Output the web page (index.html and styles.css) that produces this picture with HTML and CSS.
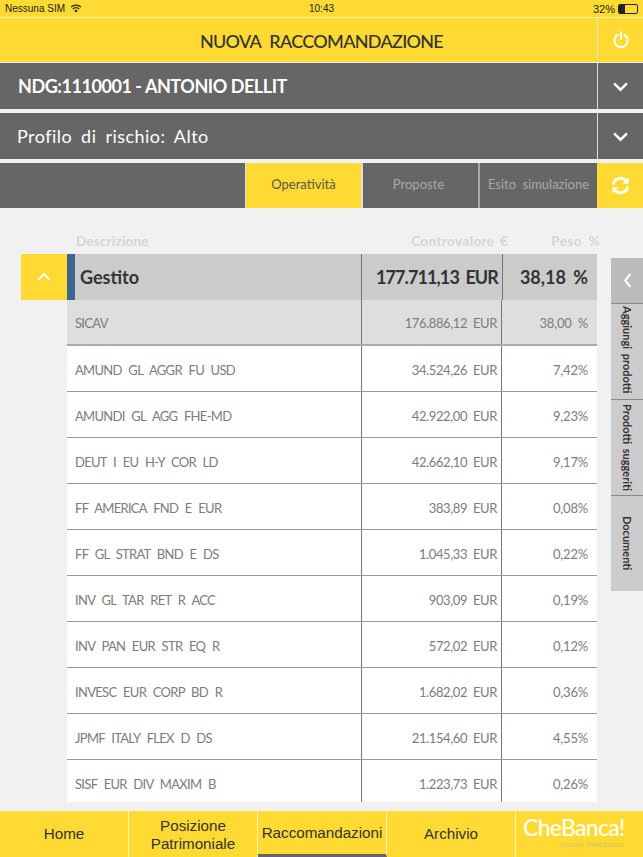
FILE: index.html
```html
<!DOCTYPE html>
<html lang="it">
<head>
    <meta charset="UTF-8">
    <meta name="viewport" content="width=device-width, initial-scale=1.0">
    <title>Nuova Raccomandazione</title>
    <link rel="stylesheet" href="styles.css">
</head>
<body>
    <div class="app">
        <div class="status">
            <div class="status-left">
                <span>Nessuna SIM</span>
                <svg class="wifi" viewBox="0 0 12 9" width="12" height="9"><path d="M1 3.2a7 7 0 0 1 10 0M2.8 5a4.5 4.5 0 0 1 6.4 0" fill="none" stroke="#222" stroke-width="1.2"/><path d="M6 8.6 4.3 6.7a2.4 2.4 0 0 1 3.4 0z" fill="#222"/></svg>
            </div>
            <span class="status-time">10:43</span>
            <div class="status-right">
                <span>32%</span>
                <span class="battery"><span class="battery-fill"></span></span>
            </div>
        </div>

        <header class="bar bar-yellow bar-title">
            <h1>NUOVA RACCOMANDAZIONE</h1>
            <div class="bar-btn">
                <svg viewBox="0 0 20 20" width="18" height="18"><path d="M6.2 4.2a7.4 7.4 0 1 0 7.6 0" fill="none" stroke="#fff" stroke-width="2.2" stroke-linecap="round"/><path d="M10 1.5v7.5" stroke="#fff" stroke-width="2.2" stroke-linecap="round"/></svg>
            </div>
        </header>

        <div class="bar bar-dark">
            <div class="bar-text bar-ndg">NDG:1110001 - ANTONIO DELLIT</div>
            <div class="bar-btn">
                <svg viewBox="0 0 18 12" width="17" height="11"><path d="M2 2.5 9 9.5 16 2.5" fill="none" stroke="#fff" stroke-width="2.6"/></svg>
            </div>
        </div>

        <div class="bar bar-dark bar-second">
            <div class="bar-text bar-profile">Profilo di rischio: Alto</div>
            <div class="bar-btn">
                <svg viewBox="0 0 18 12" width="17" height="11"><path d="M2 2.5 9 9.5 16 2.5" fill="none" stroke="#fff" stroke-width="2.6"/></svg>
            </div>
        </div>

        <nav class="tabs">
            <div class="tabs-space"></div>
            <div class="tab tab-active">Operatività</div>
            <div class="tab tab-proposte">Proposte</div>
            <div class="tab tab-esito">Esito simulazione</div>
            <div class="tab-refresh">
                <svg viewBox="0 0 20 20" width="19" height="19"><path d="M2.5 9a7.6 7.6 0 0 1 13-4.2" fill="none" stroke="#fff" stroke-width="3"/><path d="M18.6 1.5v6.6h-6.6z" fill="#fff"/><path d="M17.5 11a7.6 7.6 0 0 1-13 4.2" fill="none" stroke="#fff" stroke-width="3"/><path d="M1.4 18.5v-6.6h6.6z" fill="#fff"/></svg>
            </div>
        </nav>

        <main class="content">
            <div class="col-heads">
                <span class="col-name">Descrizione</span>
                <span class="col-value">Controvalore €</span>
                <span class="col-weight">Peso %</span>
            </div>

            <div class="group">
                <div class="group-toggle">
                    <svg viewBox="0 0 18 12" width="16" height="10"><path d="M2 9.5 9 2.5 16 9.5" fill="none" stroke="#fff" stroke-width="2.4"/></svg>
                </div>
                <div class="group-table">
                    <div class="row row-group">
                        <div class="cell cell-name">Gestito</div>
                        <div class="cell cell-value">177.711,13 EUR</div>
                        <div class="cell cell-weight">38,18 %</div>
                    </div>
                    <div class="row row-sub">
                        <div class="cell cell-name">SICAV</div>
                        <div class="cell cell-value">176.886,12 EUR</div>
                        <div class="cell cell-weight">38,00 %</div>
                    </div>
                    <div class="row">
                        <div class="cell cell-name">AMUND GL AGGR FU USD</div>
                        <div class="cell cell-value">34.524,26 EUR</div>
                        <div class="cell cell-weight">7,42%</div>
                    </div>
                    <div class="row">
                        <div class="cell cell-name">AMUNDI GL AGG FHE-MD</div>
                        <div class="cell cell-value">42.922,00 EUR</div>
                        <div class="cell cell-weight">9,23%</div>
                    </div>
                    <div class="row">
                        <div class="cell cell-name">DEUT I EU H-Y COR LD</div>
                        <div class="cell cell-value">42.662,10 EUR</div>
                        <div class="cell cell-weight">9,17%</div>
                    </div>
                    <div class="row">
                        <div class="cell cell-name">FF AMERICA FND E EUR</div>
                        <div class="cell cell-value">383,89 EUR</div>
                        <div class="cell cell-weight">0,08%</div>
                    </div>
                    <div class="row">
                        <div class="cell cell-name">FF GL STRAT BND E DS</div>
                        <div class="cell cell-value">1.045,33 EUR</div>
                        <div class="cell cell-weight">0,22%</div>
                    </div>
                    <div class="row">
                        <div class="cell cell-name">INV GL TAR RET R ACC</div>
                        <div class="cell cell-value">903,09 EUR</div>
                        <div class="cell cell-weight">0,19%</div>
                    </div>
                    <div class="row">
                        <div class="cell cell-name">INV PAN EUR STR EQ R</div>
                        <div class="cell cell-value">572,02 EUR</div>
                        <div class="cell cell-weight">0,12%</div>
                    </div>
                    <div class="row">
                        <div class="cell cell-name">INVESC EUR CORP BD R</div>
                        <div class="cell cell-value">1.682,02 EUR</div>
                        <div class="cell cell-weight">0,36%</div>
                    </div>
                    <div class="row">
                        <div class="cell cell-name">JPMF ITALY FLEX D DS</div>
                        <div class="cell cell-value">21.154,60 EUR</div>
                        <div class="cell cell-weight">4,55%</div>
                    </div>
                    <div class="row row-last">
                        <div class="cell cell-name">SISF EUR DIV MAXIM B</div>
                        <div class="cell cell-value">1.223,73 EUR</div>
                        <div class="cell cell-weight">0,26%</div>
                    </div>
                </div>
            </div>

            <aside class="side">
                <div class="side-arrow">
                    <svg viewBox="0 0 10 18" width="9" height="17"><path d="M8 2 2.5 9 8 16" fill="none" stroke="#fff" stroke-width="2.4"/></svg>
                </div>
                <div class="side-tab side-tab-first"><span>Aggiungi prodotti</span></div>
                <div class="side-tab"><span>Prodotti suggeriti</span></div>
                <div class="side-tab"><span>Documenti</span></div>
            </aside>
        </main>

        <footer class="footer">
            <div class="foot-item">Home</div>
            <div class="foot-item foot-two">Posizione<br>Patrimoniale</div>
            <div class="foot-item foot-active">Raccomandazioni</div>
            <div class="foot-item">Archivio</div>
            <div class="foot-logo">
                <div class="logo-main">CheBanca!</div>
                <div class="logo-sub">Gruppo Mediobanca</div>
            </div>
        </footer>
    </div>
</body>
</html>
```

FILE: styles.css
```css
body {
    margin: 0;
    font-family: Lato, "Open Sans", sans-serif;
    background-color: #f1f1f1;
}
.app {
    width: 643px;
    height: 857px;
    display: flex;
    flex-direction: column;
    overflow: hidden;
}

/* status bar */
.status {
    height: 17px;
    background-color: #ffda33;
    border-bottom: 1px solid #fbeea8;
    display: grid;
    grid-template-columns: 1fr auto 1fr;
    align-items: center;
    padding: 0 5px;
    font-family: "Liberation Sans", Arial, sans-serif;
    font-size: 10px;
    color: #222;
}
.status-left {
    display: flex;
    align-items: center;
    gap: 5px;
}
.status-right {
    display: flex;
    align-items: center;
    justify-content: flex-end;
    gap: 3px;
    font-size: 11px;
}
.battery {
    width: 18px;
    height: 8px;
    border: 1px solid #222;
    border-radius: 2px;
    display: block;
}
.battery-fill {
    display: block;
    width: 6px;
    height: 8px;
    background-color: #222;
}

/* top bars */
.bar {
    display: flex;
    height: 46px;
    background-color: #666;
}
.bar-yellow {
    background-color: #ffda33;
    height: 44px;
    border-bottom: 1px solid #eeeeee;
}
.bar-title h1 {
    flex: 1;
    margin: 0;
    padding-left: 46px;
    text-align: center;
    font-size: 18px;
    font-weight: 500;
    line-height: 46px;
    color: #333;
    letter-spacing: -0.7px;
    word-spacing: 5px;
}
.bar-text {
    flex: 1;
    color: #fff;
    line-height: 47px;
    padding-left: 18px;
}
.bar-ndg {
    font-size: 18px;
    font-weight: 700;
    letter-spacing: -0.45px;
}
.bar-profile {
    font-size: 18px;
    padding-left: 17px;
    letter-spacing: 0.45px;
    word-spacing: 4px;
}
.bar-btn {
    width: 45px;
    border-left: 1px solid #ddd;
    display: flex;
    align-items: center;
    justify-content: center;
}
.bar-second {
    margin-top: 4px;
}

/* tabs */
.tabs {
    display: flex;
    height: 45px;
    margin-top: 4px;
    background-color: #666;
    font-size: 13px;
}
.tabs-space {
    flex: 1;
}
.tab {
    width: 115px;
    padding-bottom: 3px;
    box-sizing: border-box;
    background-color: #666;
    color: #a8a8a8;
    display: flex;
    align-items: center;
    justify-content: center;
    word-spacing: 3px;
    box-shadow: -1px 0 0 #ddd;
}
.tab-active {
    background-color: #ffda33;
    color: #555;
}
.tab-proposte {
    margin-left: 2px;
    padding-right: 4px;
    box-shadow: -2px 0 0 #ddd;
}
.tab-esito {
    width: 117px;
    margin-left: 2px;
    box-shadow: -2px 0 0 #aaa;
}
.tab-refresh {
    width: 46px;
    background-color: #ffda33;
    display: flex;
    align-items: center;
    justify-content: center;
}

/* table */
.content {
    flex: 1;
    position: relative;
    padding: 25px 0 0 21px;
}
.col-heads {
    display: flex;
    height: 21px;
    width: 530px;
    margin-left: 46px;
    font-size: 13.5px;
    font-weight: 700;
    color: #d6d6d6;
    word-spacing: 2px;
    letter-spacing: 0.2px;
}
.col-name {
    flex: 1;
    padding-left: 9px;
}
.col-value {
    margin-right: 43px;
    letter-spacing: 0.4px;
}
.col-weight {
    margin-right: -3px;
    letter-spacing: 0.4px;
    word-spacing: 3px;
}
.group {
    display: flex;
    align-items: flex-start;
}
.group-toggle {
    width: 46px;
    height: 46px;
    background-color: #ffda33;
    display: flex;
    align-items: center;
    justify-content: center;
}
.group-table {
    width: 530px;
    background-color: #fff;
}
.row {
    display: grid;
    grid-template-columns: 295px 140px 95px;
    height: 46px;
    box-sizing: border-box;
    border-bottom: 1px solid #999;
    font-size: 13px;
    color: #7c7c7c;
}
.row-last {
    height: 42px;
    border-bottom: none;
}
.row-sub {
    background-color: #dedede;
    border-bottom: 2px solid #aaa;
}
.row-group {
    grid-template-columns: 295px 141px 94px;
    background-color: #cbcbcb;
    border-bottom: none;
    color: #333;
    font-size: 18px;
    font-weight: 700;
}
.cell {
    display: flex;
    align-items: center;
    padding-top: 2px;
    word-spacing: 3px;
}
.cell-name {
    padding-left: 8px;
    letter-spacing: -0.7px;
    word-spacing: 4px;
    border-right: 1px solid #777;
}
.cell-value {
    justify-content: flex-end;
    padding-right: 4px;
    letter-spacing: -0.4px;
    border-right: 1px solid #777;
}
.cell-weight {
    justify-content: flex-end;
    padding-right: 9px;
    letter-spacing: -0.2px;
}
.row-group .cell {
    padding-top: 0;
}
.row-group .cell-name {
    padding-left: 5px;
    letter-spacing: 0;
    border-left: 8px solid #3c6591;
}
.row-group .cell-value {
    letter-spacing: -0.9px;
}
.row-group .cell-weight {
    letter-spacing: 0;
}
.row-last .cell {
    padding-top: 6px;
}

/* side panel */
.side {
    position: absolute;
    top: 50px;
    right: 0;
    width: 32px;
    background-color: #ccc;
}
.side-arrow {
    height: 45px;
    background-color: #bbb;
    display: flex;
    align-items: center;
    justify-content: center;
}
.side-tab {
    height: 95px;
    border-top: 1px solid #888;
    display: flex;
    align-items: center;
    justify-content: center;
    font-size: 11px;
    font-weight: 700;
    color: #333;
    word-spacing: 2px;
}
.side-tab-first {
    padding-bottom: 4px;
    height: 91px;
}
.side-tab span {
    writing-mode: vertical-rl;
    white-space: nowrap;
}

/* bottom nav */
.footer {
    display: flex;
    height: 46px;
    background-color: #ffda33;
    font-family: "Liberation Sans", Arial, sans-serif;
    font-size: 15.2px;
    line-height: 18px;
    color: #333;
}
.foot-item {
    width: 128px;
    border-right: 1px solid #fff3b0;
    display: flex;
    align-items: center;
    justify-content: center;
    text-align: center;
}
.foot-two {
    padding-top: 2px;
    height: 44px;
}
.foot-active {
    height: 43px;
    border-bottom: 3px solid #666;
}
.foot-logo {
    flex: 1;
    padding: 4px 0 0 7px;
    color: #fff;
}
.logo-main {
    font-family: Lato, sans-serif;
    font-size: 23px;
    font-weight: 500;
    line-height: 25px;
    letter-spacing: -0.7px;
}
.logo-sub {
    font-size: 7px;
    line-height: 9px;
    text-align: right;
    padding-right: 19px;
    color: #d4c26a;
}
```
